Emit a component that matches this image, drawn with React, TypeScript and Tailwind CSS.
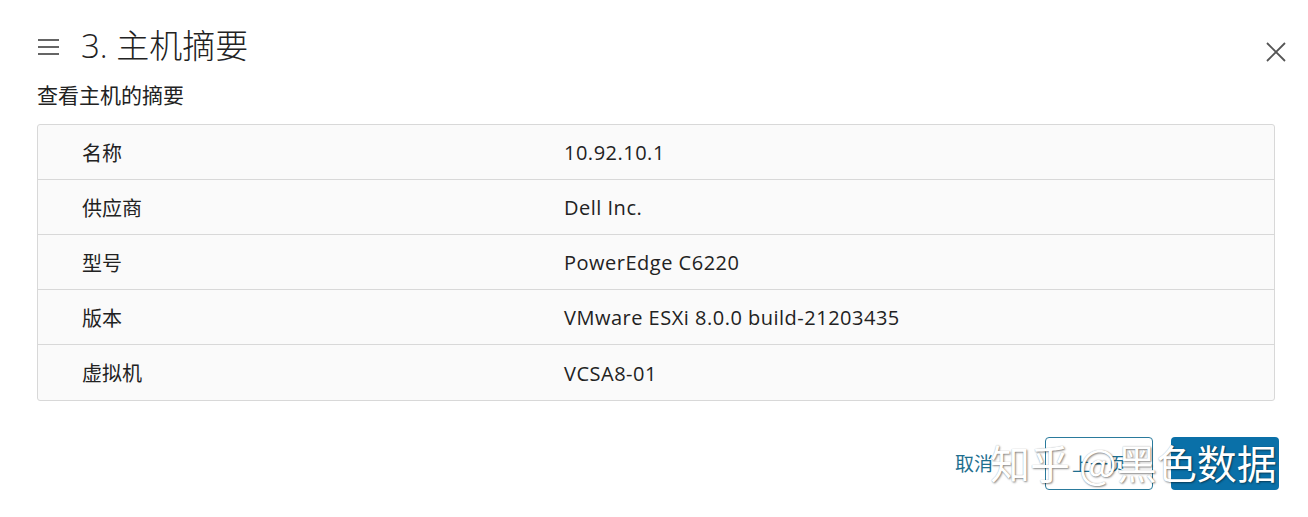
import React from "react";

const rows = [
  { label: "名称", value: "10.92.10.1" },
  { label: "供应商", value: "Dell Inc." },
  { label: "型号", value: "PowerEdge C6220" },
  { label: "版本", value: "VMware ESXi 8.0.0 build-21203435" },
  { label: "虚拟机", value: "VCSA8-01" },
];

const cjk = "font-['Noto_Sans_CJK_SC',sans-serif]";
const latin = "font-['Open_Sans','Noto_Sans_CJK_SC',sans-serif]";

const App = () => {
  return (
    <div className="relative w-[1308px] h-[517px] bg-white text-[#222] overflow-hidden">
      {/* header */}
      <div className="flex items-start justify-between pl-[38px] pr-[22px] pt-[25px]">
        <div className="flex items-center h-[42px]">
          <svg width="21" height="16" viewBox="0 0 21 16" className="mt-[1px]">
            <path d="M0 1h21M0 8h21M0 15h21" stroke="#333" strokeWidth="1.6" />
          </svg>
          <h1 className={`ml-[22px] text-[33px] leading-[42px] font-light ${latin}`}>
            3. 主机摘要
          </h1>
        </div>
        <button className="mt-[17px] w-[20px] h-[20px]">
          <svg width="20" height="20" viewBox="0 0 20 20">
            <path d="M1 1l18 18M19 1L1 19" stroke="#555" strokeWidth="1.8" />
          </svg>
        </button>
      </div>

      <div className="px-[37px]">
        <h2 className={`mt-[12px] text-[21px] leading-[30px] ${cjk}`}>查看主机的摘要</h2>

        {/* summary table */}
        <div className="mt-[15px] w-[1238px] border border-[#d8d8d8] rounded-[3px] bg-[#fafafa]">
          {rows.map((row, idx) => (
            <div
              key={idx}
              className={`grid grid-cols-[526px_1fr] h-[55px] items-center ${
                idx < rows.length - 1 ? "border-b border-[#d8d8d8]" : ""
              }`}
            >
              <span className={`pl-[44px] pt-[1px] text-[20px] ${cjk}`}>{row.label}</span>
              <span className={`pt-[2px] text-[20px] tracking-[0.5px] ${latin}`}>{row.value}</span>
            </div>
          ))}
        </div>
      </div>

      {/* footer buttons */}
      <div className="flex items-center justify-end pr-[29px] mt-[36px]">
        <button className={`text-[19px] text-[#1f6f8f] mr-[52px] ${cjk}`}>取消</button>
        <button
          className={`w-[108px] h-[53px] border border-[#2a7a9c] rounded-[4px] text-[18px] text-[#1f6f8f] ${cjk}`}
        >
          上一页
        </button>
        <button className="ml-[18px] w-[108px] h-[53px] rounded-[4px] bg-[#0a70a8]" />
      </div>

      {/* watermark */}
      <div
        className={`absolute left-[990px] top-[434px] text-[40px] leading-[56px] text-white whitespace-nowrap [text-shadow:1px_1px_2px_rgba(0,0,0,0.45),0_0_1px_rgba(0,0,0,0.3)] ${cjk}`}
      >
        知乎 @黑色数据
      </div>
    </div>
  );
};

export default App;
